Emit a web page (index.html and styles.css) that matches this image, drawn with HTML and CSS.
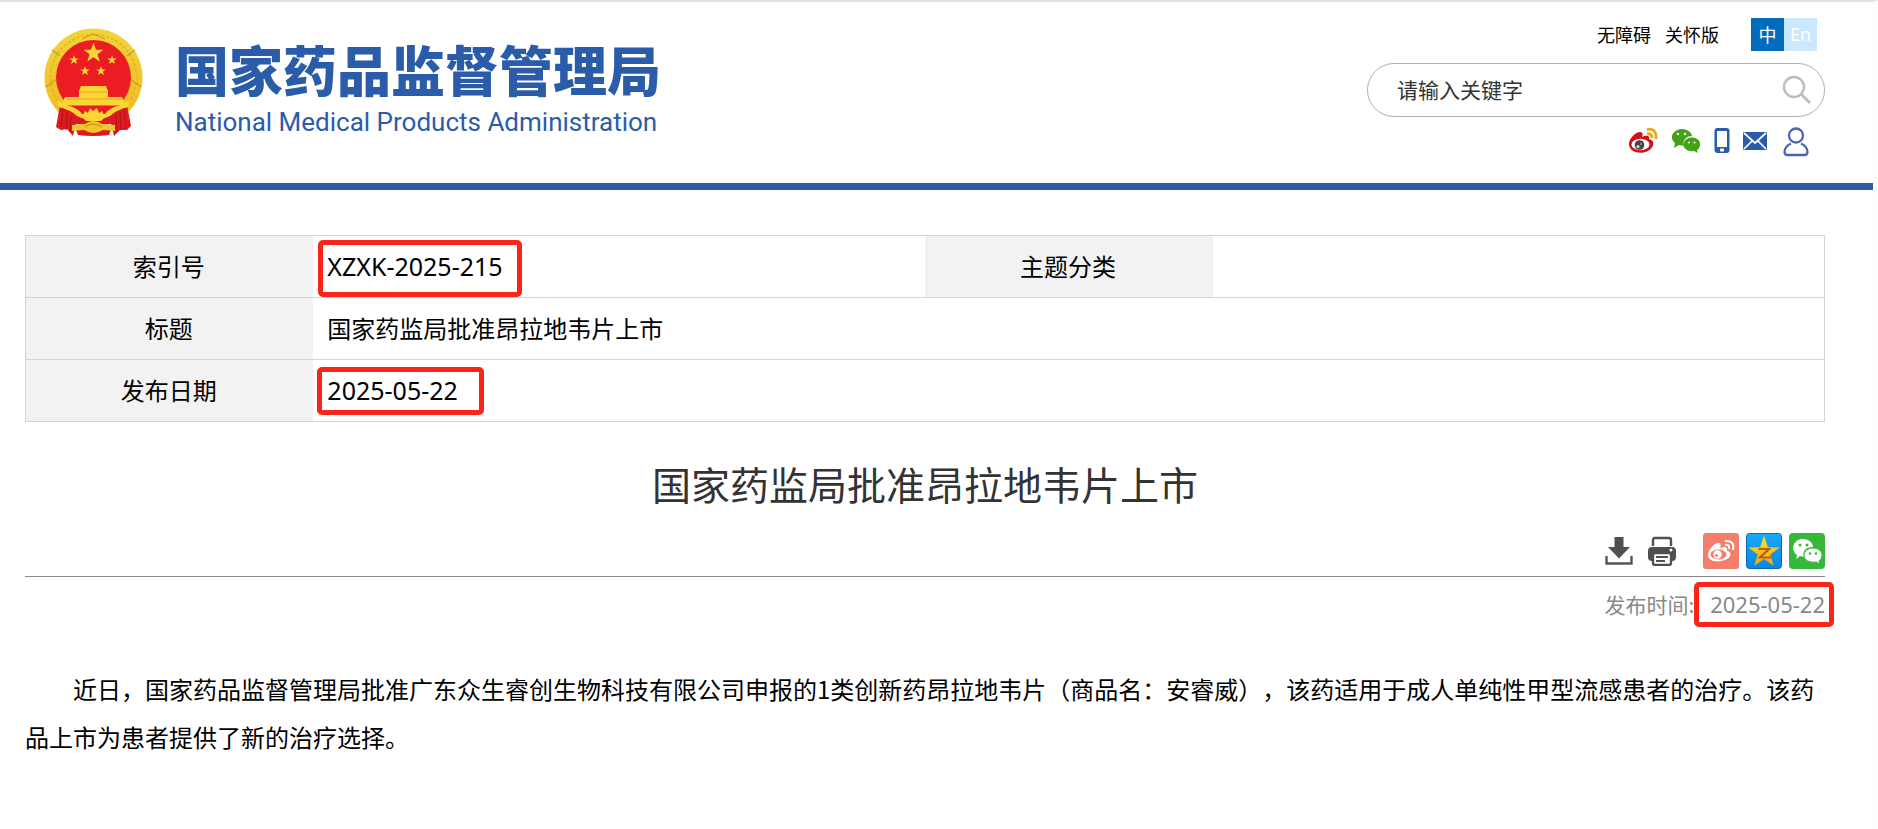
FILE: index.html
```html
<!DOCTYPE html>
<html lang="zh-CN">
<head>
<meta charset="utf-8">
<title>国家药监局批准昂拉地韦片上市</title>
<link rel="stylesheet" href="styles.css">
</head>
<body>
<svg class="defs" width="0" height="0" aria-hidden="true">
  <defs>
    <path id="star" d="M0-10 2.4-3.2 9.5-3.1 3.8 1.2 5.9 8.1 0 4 -5.9 8.1 -3.8 1.2 -9.5-3.1 -2.4-3.2Z"/>
    <linearGradient id="gold" x1="0" y1="0" x2="0" y2="1"><stop offset="0" stop-color="#f0d63a"/><stop offset="1" stop-color="#f0b820"/></linearGradient>
    <linearGradient id="sky" x1="0" y1="0" x2="0" y2="1"><stop offset="0" stop-color="#19a9fb"/><stop offset="1" stop-color="#0a86e0"/></linearGradient>
    <linearGradient id="starfill" x1="0" y1="0" x2="0" y2="1"><stop offset="0" stop-color="#ffe21f"/><stop offset="1" stop-color="#fba30c"/></linearGradient>
  </defs>
</svg>
<div class="page">
  <header class="header">
    <a class="brand" href="#">
      <svg class="emblem" viewBox="0 0 99 108" aria-hidden="true">
        <circle cx="49.500" cy="49.500" r="49" fill="url(#gold)"/>
        <circle cx="49.500" cy="49.500" r="43" fill="none" stroke="#e3b02a" stroke-width="1.500" stroke-dasharray="3 2"/>
        <path d="M2 59 13 51M97 59 86 51M8 22 16 28M91 22 83 28M38 11 49 6 61 11" stroke="#d29b1c" stroke-width="1.200" fill="none"/>
        <circle cx="49.500" cy="49.500" r="37.500" fill="#ec1c23"/>
        <path d="M16 77 12 99 17 102 23 101 29 108 32 96 67 96 70 108 76 102 83 102 87 98 83 77 66 85 33 85Z" fill="#dc1a1f"/>
        <path d="M32 102Q49 98 67 102L65 107Q49 109 34 107Z" fill="#dc1a1f"/>
        <path d="M19 80 17 99M23 84 22 102M27 87 26 104M80 80 82 99M76 84 77 102M72 87 73 104" stroke="#b01218" stroke-width="1" fill="none"/>
        <g fill="#fbd435">
          <use href="#star" transform="translate(49.500 25) scale(1.050)"/>
          <use href="#star" transform="translate(30 32) scale(.5)"/>
          <use href="#star" transform="translate(68 32) scale(.5)"/>
          <use href="#star" transform="translate(41 43) scale(.5)"/>
          <use href="#star" transform="translate(57 43) scale(.5)"/>
          <path d="M37 58H62L64 63V69H35V63Z"/>
          <path d="M21 69H78L81 76H18Z"/>
          <path d="M13 73 21 75H78L86 73 84 79Q72 82 66 88 58 92 49.500 92T33 88Q27 82 15 79Z"/>
        </g>
        <path d="M23 77.500H76Q66 79 61 86L38 86Q33 79 23 77.500Z" fill="#ec1c23"/>
        <path d="M38 89 41 83 44 85 46 80 49 83 53 80 55 85 58 83 61 89 57 93H42Z" fill="#fbd435"/>
        <path d="M28 97 41 96Q49 90 58 96L71 97V103L59 102Q49 108 40 102L28 103Z" fill="#f2c62a"/>
        <path d="M36 64H63M22 71H77" stroke="#e3a820" stroke-width="1"/>
        <path d="M41 99Q49.500 93 58 99" stroke="#d69c22" stroke-width="1.500" fill="none"/>
      </svg>
      <span class="brand-text">
        <span class="brand-zh">国家药品监督管理局</span>
        <span class="brand-en">National Medical Products Administration</span>
      </span>
    </a>
    <div class="tools">
      <nav class="links">
        <a href="#">无障碍</a>
        <a href="#">关怀版</a>
        <span class="lang"><a class="zh" href="#">中</a><a class="en" href="#">En</a></span>
      </nav>
      <form class="search">
        <input type="text" aria-label="请输入关键字" placeholder="请输入关键字">
        <button type="button" aria-label="搜索">
          <svg width="30" height="30" viewBox="0 0 30 30" fill="none" stroke="#bdbdbd"><circle cx="12" cy="12" r="10" stroke-width="2.400"/><path d="M19 19 28 28" stroke-width="2.800"/></svg>
        </button>
      </form>
      <div class="social">
        <a href="#" aria-label="微博"><svg width="30" height="28" viewBox="0 0 30 28"><path d="M1 17C1 12 7 5 12 5 15 5 15 8 14 10 18 8 22 8 21 12 27 13 27 20 20 24 12 28 1 25 1 17Z" fill="#d80f16"/><ellipse cx="12.500" cy="17.500" rx="9" ry="5.800" fill="#fff"/><circle cx="11.500" cy="18" r="4.800" fill="#444"/><circle cx="10" cy="19.500" r="1.600" fill="#ddd"/><circle cx="13" cy="17" r=".8" fill="#ddd"/><path d="M19 2.500Q29 1 28 12M19 7Q24 6 24 11" fill="none" stroke="#e5ae27" stroke-width="3"/></svg></a>
        <a href="#" aria-label="微信"><svg width="30" height="28" viewBox="0 0 30 28"><path d="M11 2C17 2 21 6 21 9 15 9 11 14 13 19L8 18 3 21 4 16C-3 10 3 2 11 2Z" fill="#43a316"/><path d="M21 10.500C27 10.500 30 15 29 19Q28 22 26 23L27 26 23 24C17 25 12.500 22 12.500 17.500 12.500 13 17 10.500 21 10.500Z" fill="#43a316"/><g fill="#fff"><circle cx="7" cy="7" r="1.200"/><circle cx="14" cy="7" r="1.200"/><circle cx="18" cy="15.500" r="1"/><circle cx="23.500" cy="15.500" r="1"/></g></svg></a>
        <a href="#" aria-label="移动端"><svg width="16" height="28" viewBox="0 0 16 28"><rect x=".5" y="1" width="15" height="25" rx="3" fill="#2a5caa"/><rect x="3" y="4" width="10" height="16" fill="#fff"/><rect x="6" y="21.500" width="4" height="3" rx="1" fill="#fff"/></svg></a>
        <a href="#" aria-label="邮箱"><svg width="24" height="28" viewBox="0 0 24 28"><rect y="5" width="24" height="18" rx="1" fill="#2a5caa"/><path d="M1 6 12 16 23 6M1 22 9 14M23 22 15 14" fill="none" stroke="#fff" stroke-width="1.700"/></svg></a>
        <a class="account" href="#" aria-label="个人中心"><svg width="26" height="30" viewBox="0 0 26 30" fill="none" stroke="#4a66ae" stroke-width="2.300"><circle cx="13" cy="8.500" r="7"/><path d="M8 16.500Q2 19 1.500 25 1.500 28 4.500 28H21.500Q24.500 28 24.500 25 24 19 18 16.500"/></svg></a>
      </div>
    </div>
  </header>
  <main class="content">
    <table class="info">
      <tr><th scope="row">索引号</th><td><span class="latin marked index-mark">XZXK-2025-215</span></td><th scope="row">主题分类</th><td></td></tr>
      <tr><th scope="row">标题</th><td colspan="3">国家药监局批准昂拉地韦片上市</td></tr>
      <tr><th scope="row">发布日期</th><td colspan="3"><span class="latin marked date-mark">2025-05-22</span></td></tr>
    </table>
    <h1>国家药监局批准昂拉地韦片上市</h1>
    <div class="actions">
      <button type="button" aria-label="下载"><svg width="28" height="30" viewBox="0 0 28 30"><path d="M9.500 1H18.500V11H25L14 22.500 3 11H9.500Z" fill="#505050"/><path d="M1.500 20V27.500H26.500V20" fill="none" stroke="#555" stroke-width="2.400"/></svg></button>
      <button type="button" aria-label="打印"><svg width="30" height="30" viewBox="0 0 30 30"><path d="M6 10V4Q6 2 8 2H22Q24 2 24 4V10" fill="none" stroke="#505050" stroke-width="2.400"/><rect x="1" y="11" width="28" height="14" rx="4" fill="#505050"/><rect x="6" y="17" width="18" height="12" rx="2" fill="#fff" stroke="#505050" stroke-width="2.400"/><path d="M9 21H21M9 25H18" stroke="#505050" stroke-width="2"/><circle cx="24" cy="14" r="1.500" fill="#fff"/></svg></button>
      <div class="share">
        <a href="#" aria-label="分享到微博"><svg width="36" height="36" viewBox="0 0 36 36"><rect width="36" height="36" rx="3" fill="#f57d6c"/><path d="M5 22C5 17 11 10 15 10 18 10 18 12 17 15 22 13 25 14 24 18 30 19 28 25 22 27 14 30 5 28 5 22Z" fill="#fff"/><ellipse cx="15.500" cy="21.500" rx="8" ry="5" fill="#f57d6c"/><circle cx="14.500" cy="21.500" r="4.200" fill="#fff"/><circle cx="13.500" cy="22.500" r="1.500" fill="#f57d6c"/><path d="M22 8Q32 7 30 17M22 12Q27 11 26 16" fill="none" stroke="#fff" stroke-width="2"/></svg></a>
        <a href="#" aria-label="分享到QQ空间"><svg width="36" height="36" viewBox="0 0 36 36"><rect x=".5" y=".5" width="35" height="35" rx="3" fill="url(#sky)" stroke="#0869bd"/><use href="#star" transform="translate(18 19.500) scale(1.650)" fill="url(#starfill)"/><path d="M12.500 16H23L14 24.500H25" fill="none" stroke="#b56205" stroke-width="2.200"/></svg></a>
        <a href="#" aria-label="分享到微信"><svg width="36" height="36" viewBox="0 0 36 36"><rect width="36" height="36" rx="4" fill="#36b83a"/><path d="M14 6C20 6 24 10 24 14 17 14 13 18 15 24L11 23 7 26 8 22C1 17 4 6 14 6Z" fill="#fff"/><path d="M24 15C30 15 33 19 33 22.500Q33 26 30 28L31 31 27 29C20 30 15 27 15 22.500 15 18 19 15 24 15Z" fill="#fff" stroke="#36b83a"/><g fill="#36b83a"><circle cx="11" cy="12" r="1.500"/><circle cx="18" cy="12" r="1.500"/><circle cx="21" cy="20.500" r="1.300"/><circle cx="27" cy="20.500" r="1.300"/></g></svg></a>
      </div>
    </div>
    <p class="published">发布时间: <time class="marked published-mark" datetime="2025-05-22">2025-05-22</time></p>
    <p class="article">近日，国家药品监督管理局批准广东众生睿创生物科技有限公司申报的1类创新药昂拉地韦片（商品名：安睿威），该药适用于成人单纯性甲型流感患者的治疗。该药品上市为患者提供了新的治疗选择。</p>
  </main>
</div>
</body>
</html>
```
FILE: styles.css
```css
* { box-sizing: border-box; }
body {
  margin: 0;
  background: #fff;
  color: #000;
  font: 24px/48px "Noto Sans CJK SC", sans-serif;
  text-spacing-trim: space-all;
}
a { color: inherit; text-decoration: none; }
button { padding: 0; border: 0; background: none; cursor: pointer; }
svg { display: block; }
.defs { position: absolute; }
.page {
  min-height: 100vh;
  border-top: 2px solid #e0e1e2;
  border-right: 5px solid #fcfcfc;
}
.header {
  display: flex;
  justify-content: space-between;
  height: 188px;
  padding: 16px 48px 0 44px;
  border-bottom: 7px solid #2a5caa;
}
.brand { display: flex; gap: 32px; padding-top: 10px; color: #2a5caa; }
.emblem { width: 99px; height: 108px; }
.brand-text { display: flex; flex-direction: column; padding-top: 10px; }
.brand-zh { font-size: 54px; font-weight: 900; line-height: 62px; }
.brand-en { font: 400 26px/32px Roboto, sans-serif; padding-top: 6px; }
.tools { width: 458px; }
.links {
  display: flex;
  justify-content: flex-end;
  gap: 14px;
  padding-right: 8px;
  font-size: 18px;
  line-height: 32px;
}
.lang { display: flex; margin-left: 18px; color: #fff; text-align: center; }
.lang a { width: 33px; height: 33px; }
.zh { background: #006cbb; }
.en { background: #cce8ff; font-family: "Noto Sans", sans-serif; }
.search {
  display: flex;
  align-items: center;
  height: 54px;
  margin-top: 12px;
  padding: 0 12px 0 29px;
  border: 1px solid #b0b0b0;
  border-radius: 27px;
}
.search input {
  flex: 1;
  min-width: 0;
  padding: 0 0 3px;
  border: 0;
  outline: 0;
  background: none;
  font: 21px/32px "Noto Sans CJK SC", sans-serif;
}
.search input::placeholder { color: #333; opacity: 1; }
.social {
  display: flex;
  justify-content: flex-end;
  gap: 13px;
  padding: 10px 16px 0 0;
}
.account { margin-left: 3px; }
.content { padding: 45px 48px 0 25px; }
.info {
  width: 100%;
  border: 1px solid #d5d5d5;
  border-collapse: collapse;
  table-layout: fixed;
}
.info tr { height: 62px; border-bottom: 1px solid #d5d5d5; }
.info th { width: 16%; padding: 0 2px 2px 0; background: #f2f2f2; font-weight: 400; }
.info td { padding: 0 14px 2px; }
.latin { font: 25px/36px "Noto Sans", sans-serif; }
.marked { position: relative; display: inline-block; }
.marked::after {
  content: "";
  position: absolute;
  border: 5px solid #fa2419;
  border-radius: 5px;
}
.index-mark::after { inset: -8px -19px -13px -9px; }
.date-mark::after { inset: -5px -26px -7px -10px; }
.published-mark::after { inset: -6px -9px -7px -16px; }
h1 {
  margin: 31px 0 0;
  color: #333;
  font-size: 39px;
  font-weight: 400;
  line-height: 60px;
  text-align: center;
}
.actions {
  display: flex;
  justify-content: flex-end;
  align-items: center;
  gap: 14px;
  height: 64px;
  padding-top: 12px;
  border-bottom: 1px solid #888;
}
.share { display: flex; gap: 7px; margin-left: 12px; }
.published {
  margin: 11px 0 0;
  color: #888;
  font-size: 21px;
  line-height: 32px;
  text-align: right;
}
.published-mark { margin-left: 11px; font: 22px/32px "Noto Sans", sans-serif; }
.article { margin: 45px 0 0; text-indent: 48px; }
```
